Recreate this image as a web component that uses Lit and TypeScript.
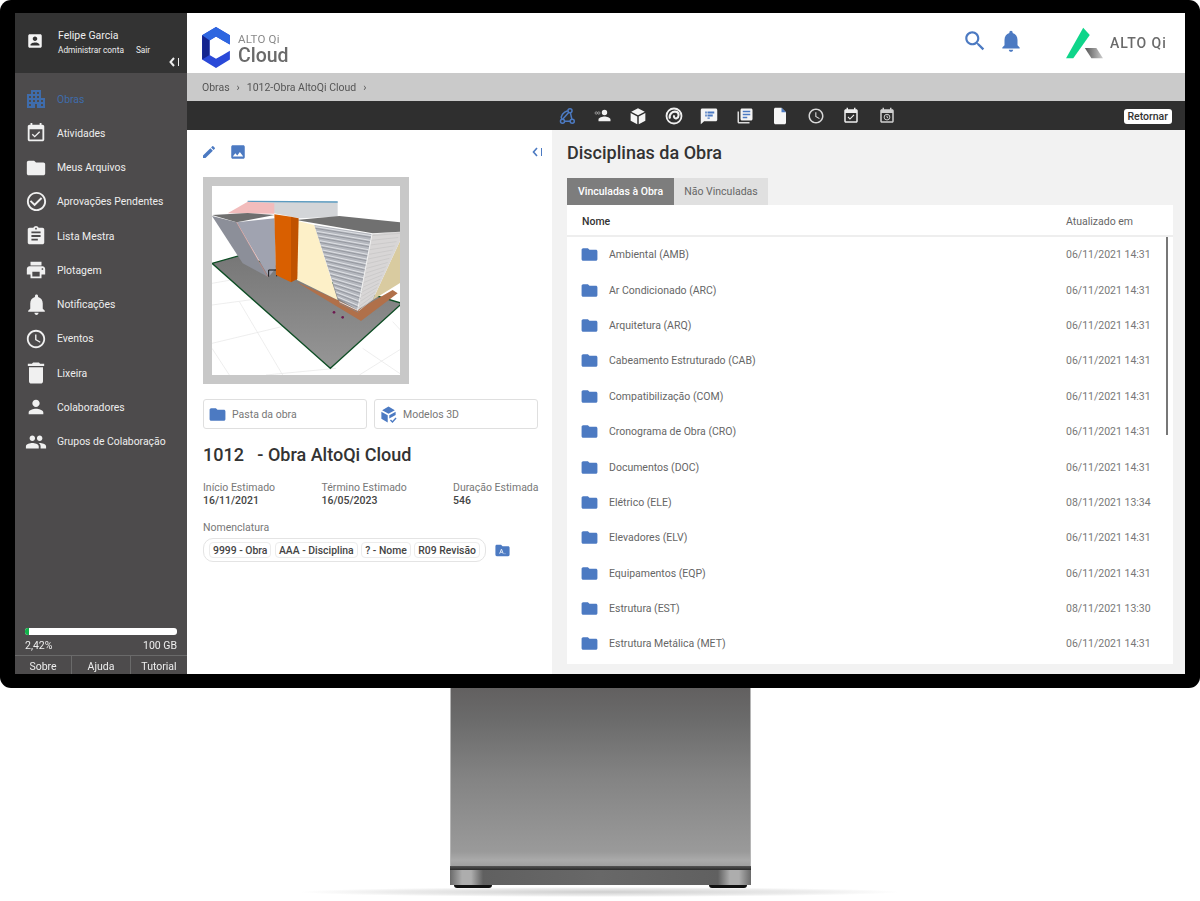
import { LitElement, html, css, svg } from "lit";
import { customElement } from "lit/decorators.js";

const P = {
  account: "M3 5v14c0 1.1.89 2 2 2h14c1.1 0 2-.9 2-2V5c0-1.1-.9-2-2-2H5c-1.11 0-2 .9-2 2zm12 4c0 1.66-1.34 3-3 3s-3-1.34-3-3 1.34-3 3-3 3 1.34 3 3zm-9 8c0-2 4-3.1 6-3.1s6 1.1 6 3.1v1H6v-1z",
  city: "M17 11V3H7v4H3v14h8v-4h2v4h8V11h-4zM7 19H5v-2h2v2zm0-4H5v-2h2v2zm0-4H5V9h2v2zm4 4H9v-2h2v2zm0-4H9V9h2v2zm0-4H9V5h2v2zm4 8h-2v-2h2v2zm0-4h-2V9h2v2zm0-4h-2V5h2v2zm4 12h-2v-2h2v2zm0-4h-2v-2h2v2z",
  event: "M16.53 11.06L15.47 10l-4.88 4.88-2.12-2.12-1.06 1.06L10.59 17l5.94-5.94zM19 3h-1V1h-2v2H8V1H6v2H5c-1.11 0-1.99.9-1.99 2L3 19c0 1.1.89 2 2 2h14c1.1 0 2-.9 2-2V5c0-1.1-.9-2-2-2zm0 16H5V8h14v11z",
  folder: "M10 4H4c-1.1 0-1.99.9-1.99 2L2 18c0 1.1.9 2 2 2h16c1.1 0 2-.9 2-2V8c0-1.1-.9-2-2-2h-8l-2-2z",
  check: "M16.59 7.58L10 14.17l-3.59-3.58L5 12l5 5 8-8zM12 2C6.48 2 2 6.48 2 12s4.48 10 10 10 10-4.48 10-10S17.52 2 12 2zm0 18c-4.42 0-8-3.58-8-8s3.58-8 8-8 8 3.58 8 8-3.58 8-8 8z",
  assignment: "M19 3h-4.18C14.4 1.84 13.3 1 12 1c-1.3 0-2.4.84-2.82 2H5c-1.1 0-2 .9-2 2v14c0 1.1.9 2 2 2h14c1.1 0 2-.9 2-2V5c0-1.1-.9-2-2-2zm-7 0c.55 0 1 .45 1 1s-.45 1-1 1-1-.45-1-1 .45-1 1-1zm2 14H7v-2h7v2zm3-4H7v-2h10v2zm0-4H7V7h10v2z",
  print: "M19 8H5c-1.66 0-3 1.34-3 3v6h4v4h12v-4h4v-6c0-1.66-1.34-3-3-3zm-3 11H8v-5h8v5zm3-7c-.55 0-1-.45-1-1s.45-1 1-1 1 .45 1 1-.45 1-1 1zm-1-9H6v4h12V3z",
  bell: "M12 22c1.1 0 2-.9 2-2h-4c0 1.1.89 2 2 2zm6-6v-5c0-3.07-1.64-5.64-4.5-6.32V4c0-.83-.67-1.5-1.5-1.5s-1.5.67-1.5 1.5v.68C7.63 5.36 6 7.92 6 11v5l-2 2v1h16v-1l-2-2z",
  clock: "M11.99 2C6.47 2 2 6.48 2 12s4.47 10 9.99 10C17.52 22 22 17.52 22 12S17.52 2 11.99 2zM12 20c-4.42 0-8-3.58-8-8s3.58-8 8-8 8 3.58 8 8-3.58 8-8 8zm.5-13H11v6l5.25 3.15.75-1.23-4.5-2.67z",
  trash: "M6 19c0 1.1.9 2 2 2h8c1.1 0 2-.9 2-2V7H6v12zM19 4h-3.5l-1-1h-5l-1 1H5v2h14V4z",
  person: "M12 12c2.21 0 4-1.79 4-4s-1.79-4-4-4-4 1.79-4 4 1.79 4 4 4zm0 2c-2.67 0-8 1.34-8 4v2h16v-2c0-2.66-5.33-4-8-4z",
  people: "M16 11c1.66 0 2.99-1.34 2.99-3S17.66 5 16 5c-1.66 0-3 1.34-3 3s1.34 3 3 3zm-8 0c1.66 0 2.99-1.34 2.99-3S9.66 5 8 5C6.34 5 5 6.34 5 8s1.34 3 3 3zm0 2c-2.33 0-7 1.17-7 3.5V19h14v-2.5c0-2.33-4.67-3.5-7-3.5zm8 0c-.29 0-.62.02-.97.05 1.16.84 1.97 1.97 1.97 3.45V19h6v-2.5c0-2.33-4.67-3.5-7-3.5z",
  search: "M15.5 14h-.79l-.28-.27C15.41 12.59 16 11.11 16 9.5 16 5.91 13.09 3 9.5 3S3 5.91 3 9.5 5.91 16 9.5 16c1.61 0 3.09-.59 4.23-1.57l.27.28v.79l5 4.99L20.49 19l-4.99-5zm-6 0C7.01 14 5 11.99 5 9.5S7.01 5 9.5 5 14 7.01 14 9.5 11.99 14 9.5 14z",
  edit: "M3 17.25V21h3.75L17.81 9.94l-3.75-3.75L3 17.25zM20.71 7.04c.39-.39.39-1.02 0-1.41l-2.34-2.34c-.39-.39-1.02-.39-1.41 0l-1.83 1.83 3.75 3.75 1.83-1.83z",
  image: "M21 19V5c0-1.1-.9-2-2-2H5c-1.1 0-2 .9-2 2v14c0 1.1.9 2 2 2h14c1.1 0 2-.9 2-2zM8.5 13.5l2.5 3.01L14.5 12l4.5 6H5l3.5-4.5z",
  books: "M4 6H2v14c0 1.1.9 2 2 2h14v-2H4V6z",
};

const BLUE = "#4c7ac2";

const icon = (d: string, size: number, color: string) => html`<svg class="ic" width=${size} height=${size} viewBox="0 0 24 24" fill=${color}><path d=${d}></path></svg>`;

// label, path, icon size
const NAV: [string, string, number][] = [
  ["Obras", P.city, 24],
  ["Atividades", P.event, 22],
  ["Meus Arquivos", P.folder, 22],
  ["Aprovações Pendentes", P.check, 23],
  ["Lista Mestra", P.assignment, 22],
  ["Plotagem", P.print, 22],
  ["Notificações", P.bell, 25],
  ["Eventos", P.clock, 22],
  ["Lixeira", P.trash, 28],
  ["Colaboradores", P.person, 22],
  ["Grupos de Colaboração", P.people, 22],
];

const ROWS = [
  ["Ambiental (AMB)", "06/11/2021 14:31"],
  ["Ar Condicionado (ARC)", "06/11/2021 14:31"],
  ["Arquitetura (ARQ)", "06/11/2021 14:31"],
  ["Cabeamento Estruturado (CAB)", "06/11/2021 14:31"],
  ["Compatibilização (COM)", "06/11/2021 14:31"],
  ["Cronograma de Obra (CRO)", "06/11/2021 14:31"],
  ["Documentos (DOC)", "06/11/2021 14:31"],
  ["Elétrico (ELE)", "08/11/2021 13:34"],
  ["Elevadores (ELV)", "06/11/2021 14:31"],
  ["Equipamentos (EQP)", "06/11/2021 14:31"],
  ["Estrutura (EST)", "08/11/2021 13:30"],
  ["Estrutura Metálica (MET)", "06/11/2021 14:31"],
];

const FIELDS = [
  ["Início Estimado", "16/11/2021", 119],
  ["Término Estimado", "16/05/2023", 132],
  ["Duração Estimada", "546", 85],
];

const TOOLS = [
  svg`<g fill="none" stroke="#4c7ac2" stroke-width="2"><path d="M6.500 16 14.500 7M8.500 19h8M18.500 16.500 16.500 7.500M5 16c-2-4 2-9 8-11"></path><circle cx="6" cy="19" r="2.700"></circle><circle cx="19" cy="19" r="2.700"></circle><circle cx="16" cy="5" r="2.700"></circle></g>`,
  svg`<path fill="#f0f0f0" d="M14 11a3.600 3.600 0 1 0 0-7.200 3.600 3.600 0 0 0 0 7.200zm0 1.800c-2.600 0-8 1.300-8 3.900V19h16v-2.300c0-2.600-5.400-3.900-8-3.900z"></path><g fill="none" stroke="#aaa" stroke-width="1"><circle cx="3" cy="8" r="1.600"></circle><circle cx="6.400" cy="8" r="1.600"></circle></g>`,
  svg`<path fill="#f4f4f4" d="M12 1.500 21 6.400 12 11 3 6.400zM2.200 8 11 12.500V23L2.200 18.200zM21.800 8 13 12.500V23l8.800-4.800z"></path>`,
  svg`<g fill="none" stroke="#f0f0f0"><circle cx="12" cy="12" r="10" stroke-width="2.400"></circle><path stroke-width="2.800" d="M6.500 15.500c-1.500-5.500 3-10.500 9-9 3.500 1 3.500 7 0 8.500-2.500 1-4.500-1.500-3-4"></path></g>`,
  svg`<path fill="#f4f4f4" d="M21 2H3C1.900 2 1 2.900 1 4v19l4.500-4H21c1.100 0 2-.9 2-2V4c0-1.100-.9-2-2-2z"></path><path fill="#4c7ac2" d="M10 6h9v2.500h-9zM10 10h7v2.500h-7zM10 14h3v1.500h-3zM7 6h2v2.500H7zM7 10h2v2.500H7z"></path>`,
  svg`<path fill="#dcdcdc" d=${P.books}></path><path fill="#f4f4f4" d="M8 2h12c1.100 0 2 .9 2 2v12c0 1.100-.9 2-2 2H8c-1.100 0-2-.9-2-2V4c0-1.100.9-2 2-2z"></path><path fill="#4c7ac2" d="M9 5h10v2H9zM9 9h10v2H9zM9 13h6v2H9z"></path>`,
  svg`<path fill="#f6f6f6" d="M6 1C4.900 1 4.010 1.900 4.010 3L4 21c0 1.100.89 2 1.990 2H18c1.100 0 2-.9 2-2V7l-6-6H6z"></path><path fill="#4c7ac2" d="M14 1l6 6h-6z"></path>`,
  svg`<path fill="#d8d8d8" d=${P.clock}></path>`,
  svg`<path fill="#eeeeee" d=${P.event}></path>`,
  svg`<path fill="#d0d0d0" d="M19 3h-1V1h-2v2H8V1H6v2H5c-1.110 0-1.990.9-1.990 2L3 19c0 1.100.89 2 2 2h14c1.100 0 2-.9 2-2V5c0-1.100-.9-2-2-2zm0 16H5V8h14v11z"></path><g fill="none" stroke="#d0d0d0" stroke-width="1.300"><circle cx="12" cy="13.500" r="3.800"></circle><path d="M12 11.500v2.200l1.600 1"></path></g>`,
];

// stripes on the facade of the model
const stripes = Array.from({ length: 17 }, (_, i) => {
  const t = i / 16;
  const y1 = 275 + t * 225;
  const x1 = 358 + t * 72;
  const x2 = 525 - t * 38;
  const y2 = 302 + t * 225;
  return svg`<line x1=${x1} y1=${y1} x2=${x2} y2=${y2} stroke="#dfe1e5" stroke-width="3"></line><line x1=${x1} y1=${y1 + 5} x2=${x2} y2=${y2 + 5} stroke="#85888f" stroke-width="2"></line><line x1=${x2 + 2} y1=${y2} x2=${612 - t * 85} y2=${295 + t * 200} stroke="#c9c8c8" stroke-width="2.500"></line>`;
});

@customElement("app-root")
export class AppRoot extends LitElement {
  static styles = css`
    :host {
      display: block;
      position: relative;
      width: 1200px;
      height: 901px;
      overflow: hidden;
      background: #fff;
      font-family: Roboto, "Liberation Sans", sans-serif;
      font-size: 11px;
    }
    .ic {
      display: block;
      flex: none;
    }

    /* monitor */
    .frame {
      box-sizing: border-box;
      height: 688px;
      padding: 13px 15px 14px;
      background: #000;
      border-radius: 11px;
    }
    .screen {
      display: flex;
      height: 661px;
      overflow: hidden;
      filter: blur(0.3px);
    }
    .stand {
      position: relative;
      z-index: 1;
      display: flex;
      flex-direction: column;
      width: 301px;
      height: 200px;
      margin-left: 450px;
    }
    .stand-body {
      flex: 1;
      border-left: 1px solid #b5b5b5;
      border-right: 1px solid #b5b5b5;
      background: linear-gradient(#626060, #6b6b6b 18%, #838383 50%, #9a9a9a 92%, #ababab 97%, #a0a0a0);
    }
    .stand-lip {
      height: 4px;
      background: linear-gradient(#555, #2c2c2c);
    }
    .stand-base {
      height: 15px;
      background: linear-gradient(90deg, #6a6a6a, #adadad 4%, #adadad 7%, #606060 11%, #686868 50%, #606060 89%, #adadad 93%, #adadad 96%, #6a6a6a);
    }
    .stand-feet {
      display: flex;
      justify-content: space-between;
      height: 3px;
      padding: 0 4px;
    }
    .stand-feet i {
      display: block;
      width: 38px;
      background: #111;
      border-radius: 0 0 3px 3px;
    }
    .floor {
      position: absolute;
      left: 300px;
      top: 887px;
      width: 600px;
      height: 10px;
      background: radial-gradient(closest-side, #cfcfcf, #ececec 70%, #fff);
    }

    /* sidebar */
    .side {
      display: flex;
      flex-direction: column;
      flex: none;
      width: 172px;
      background: #4d4b4c;
      color: #eee;
    }
    .user {
      display: flex;
      height: 60px;
      box-sizing: border-box;
      padding: 17px 7px 0 11px;
      background: #333;
      gap: 14px;
    }
    .user > .ic {
      margin-top: 2px;
    }
    .user-info {
      flex: 1;
    }
    .user-name {
      font-size: 10.5px;
      line-height: 12px;
    }
    .user-links {
      display: flex;
      gap: 12px;
      margin-top: 3px;
      font-size: 8.3px;
      line-height: 10px;
    }
    .collapse {
      display: flex;
      justify-content: flex-end;
      margin-top: 2px;
    }
    .nav {
      flex: 1;
      padding-top: 9px;
    }
    .nav-item {
      display: flex;
      align-items: center;
      gap: 10px;
      height: 34.25px;
      padding-left: 10px;
      font-size: 10.4px;
    }
    .nav-item.on {
      color: #3f6cab;
    }
    .nav-icon {
      display: flex;
      justify-content: center;
      align-items: center;
      flex: none;
      width: 22px;
    }
    .nav-icon .ic {
      margin: -4px;
    }
    .usage {
      padding: 0 10px;
    }
    .bar {
      height: 7px;
      background: #fff;
      border-radius: 3px;
      overflow: hidden;
    }
    .bar i {
      display: block;
      height: 100%;
      background: #12b04a;
    }
    .usage-text {
      display: flex;
      justify-content: space-between;
      height: 20px;
      align-items: center;
      font-size: 10.5px;
    }
    .links {
      display: flex;
      height: 18px;
      border-top: 1px solid #6a6a6a;
      text-align: center;
      font-size: 10.5px;
      line-height: 21px;
    }
    .links span + span {
      border-left: 1px solid #6a6a6a;
    }
    .links span:nth-child(1) {
      width: 56px;
    }
    .links span:nth-child(2) {
      width: 58px;
    }
    .links span:nth-child(3) {
      flex: 1;
    }

    /* top */
    .main {
      flex: 1;
      display: flex;
      flex-direction: column;
      min-width: 0;
    }
    .top {
      display: flex;
      align-items: center;
      flex: none;
      height: 60px;
      background: #fff;
      padding: 0 16px 0 15px;
    }
    .brand {
      display: flex;
      align-items: center;
      gap: 8px;
      flex: 1;
      padding-top: 9px;
      color: #6a6a6a;
    }
    .brand-text {
      margin-top: 4px;
    }
    .brand-alto {
      font-size: 11.5px;
      line-height: 12px;
      letter-spacing: 0.2px;
      color: #8a8a8a;
    }
    .brand-cloud {
      font-size: 19.5px;
      line-height: 21px;
      font-weight: 500;
    }
    .top-actions {
      display: flex;
      align-items: center;
      gap: 10px;
      margin: 0 41px 4px 0;
    }
    .alto {
      display: flex;
      align-items: center;
      gap: 6px;
      color: #6a6a6a;
      font-size: 14px;
      font-weight: 500;
      letter-spacing: 1px;
      width: 104px;
      white-space: nowrap;
    }
    .crumb {
      display: flex;
      align-items: center;
      gap: 7px;
      flex: none;
      height: 28px;
      padding-left: 15px;
      background: #cacaca;
      color: #555;
      font-size: 10.5px;
    }
    .tools {
      display: flex;
      align-items: center;
      flex: none;
      height: 29px;
      box-sizing: border-box;
      padding: 1px 13px 0 371px;
      background: #2f2f2f;
    }
    .tools-icons {
      display: flex;
      flex: 1;
      gap: 17.5px;
    }
    .back {
      padding: 0 4px;
      height: 15px;
      line-height: 15px;
      border-radius: 3px;
      background: #fff;
      color: #333;
      font-size: 10.5px;
      font-weight: 500;
    }

    /* content */
    .content {
      flex: 1;
      display: flex;
      min-height: 0;
    }
    .left {
      flex: none;
      width: 365px;
      box-sizing: border-box;
      padding: 13px 14px 0 16px;
      background: #fff;
    }
    .left-tools {
      display: flex;
      align-items: center;
      gap: 12px;
      height: 18px;
      margin: 0 -5px 0 -2px;
    }
    .left-tools span {
      flex: 1;
    }
    .photo {
      width: 188px;
      height: 189px;
      margin-top: 16px;
      border: 9px solid #c8c8c8;
      background: #fff;
    }
    .photo svg {
      display: block;
    }
    .btns {
      display: flex;
      gap: 7px;
      margin-top: 15px;
    }
    .btn {
      display: flex;
      align-items: center;
      gap: 5px;
      flex: 1;
      height: 30px;
      box-sizing: border-box;
      padding-left: 4px;
      border: 1px solid #dfdfdf;
      border-radius: 3px;
      color: #777;
      font-size: 10.5px;
    }
    .title {
      margin: 15px 0 0;
      font-size: 18px;
      line-height: 22px;
      font-weight: 500;
      color: #333;
      white-space: pre;
    }
    .fields {
      display: flex;
      margin-top: 15px;
    }
    .field {
      white-space: nowrap;
    }
    .field-label {
      color: #777;
      font-size: 10.5px;
      line-height: 13px;
    }
    .field-value {
      color: #444;
      font-size: 10.5px;
      line-height: 13px;
      font-weight: 500;
    }
    .nom-label {
      margin-top: 14px;
      color: #777;
      font-size: 10.5px;
      line-height: 13px;
    }
    .nom {
      display: flex;
      align-items: center;
      gap: 8px;
      margin-top: 4px;
    }
    .chips {
      display: flex;
      align-items: center;
      gap: 3.5px;
      height: 24px;
      box-sizing: border-box;
      padding: 0 5px;
      border: 1px solid #e4e4e4;
      border-radius: 10px;
    }
    .chip {
      height: 16px;
      line-height: 16px;
      padding: 0 3px;
      border: 1px solid #ececec;
      border-radius: 4px;
      box-sizing: border-box;
      color: #444;
      font-size: 10.4px;
      font-weight: 500;
      white-space: nowrap;
    }
    .right {
      flex: 1;
      min-width: 0;
      box-sizing: border-box;
      padding: 11px 12px 10px 15px;
      background: #f2f2f2;
    }
    .right h2 {
      margin: 0;
      font-size: 18px;
      line-height: 24px;
      font-weight: 500;
      color: #333;
    }
    .tabs {
      display: flex;
      margin-top: 13px;
      height: 27px;
      line-height: 27px;
      font-size: 10.5px;
      text-align: center;
    }
    .tab {
      width: 94px;
      background: #e0e0e0;
      color: #666;
    }
    .tab.on {
      width: 107px;
      background: #7d7d7d;
      color: #fff;
      font-weight: 500;
    }
    .table {
      position: relative;
      height: 459px;
      background: #fff;
      overflow: hidden;
    }
    .head,
    .row {
      display: grid;
      grid-template-columns: 1fr 107px;
      align-items: center;
      color: #666;
      font-size: 10.5px;
    }
    .head {
      height: 32px;
      box-sizing: border-box;
      padding: 2px 0 0 15px;
      border-bottom: 2px solid #eee;
    }
    .head b {
      font-weight: 500;
      color: #333;
    }
    .row {
      height: 35.4px;
      padding-left: 13px;
    }
    .row-name {
      display: flex;
      align-items: center;
      gap: 10px;
    }
    .row-date {
      color: #777;
    }
    .scroll {
      position: absolute;
      right: 5px;
      top: 32px;
      width: 2px;
      height: 198px;
      background: #777;
    }
  `;

  private renderLogo() {
    return html`<svg width="28" height="41" viewBox="608 82 82 121">
      <path fill="#2a49d8" d="M649 82 690 106V134L669 122 649 110 630 122V165L649 176 669 165 690 152V178L649 203 608 178V106Z"></path>
      <path fill="#2e66e0" d="M649 82 690 106V134L669 122 649 110 630 122 608 106Z"></path>
      <path fill="#14248f" d="M608 106 630 122V165L608 178Z"></path>
    </svg>`;
  }

  private renderModel() {
    return html`<svg width="188" height="189" viewBox="48 153 564 567" preserveAspectRatio="none">
      <defs>
        <linearGradient id="gnd" x1="0" y1="0" x2="0" y2="1"><stop offset="0" stop-color="#777"></stop><stop offset="1" stop-color="#969696"></stop></linearGradient>
      </defs>
      <g stroke="#e6e6e6" stroke-width="2" fill="none">
        <path d="M48 445 190 420M48 510 270 480M48 625 320 560M210 720 420 700M490 720 618 640M100 720 48 640M130 500 260 720M500 640 618 720M590 560 618 590"></path>
      </g>
      <path fill="url(#gnd)" stroke="#0d4d24" stroke-width="4" d="M48 385 130 362 618 505 403 700Z"></path>
      <path fill="#d3d5d8" d="M155 198 425 200 425 245 310 250 235 235 155 232Z"></path>
      <path fill="none" stroke="#5b9bc0" stroke-width="4" d="M155 199 425 201"></path>
      <path fill="#f2bcbc" d="M95 235 155 200 235 205 235 236Z"></path>
      <path fill="#8c8f99" d="M48 243 122 262 215 425 140 385Z"></path>
      <path fill="#a0a3b0" d="M122 262 236 250 240 400 218 425Z"></path>
      <path fill="#6f6f6f" d="M48 240 155 234 236 240 122 262Z"></path>
      <path fill="none" stroke="#e08a80" stroke-width="1.5" d="M122 262 215 425"></path>
      <path fill="none" stroke="#111" stroke-width="3" d="M218 425V405H242V424"></path>
      <path fill="#b0704a" d="M300 440 425 495 485 525 590 465 605 475 495 558Z"></path>
      <path fill="#fdf0c8" d="M305 258 355 270 425 495 303 435Z"></path>
      <path fill="#d9cba0" d="M618 305V440L530 495Z"></path>
      <path fill="#b5b8bf" d="M355 270 528 297 485 525 425 490Z"></path>
      <path fill="#d8d6d6" d="M528 297 618 290V305L530 495 485 525Z"></path>
      ${stripes}
      <path fill="#707070" d="M300 255 430 243 618 262V290L530 295Z"></path>
      <path fill="none" stroke="#f0f0f0" stroke-width="3" d="M528 297 485 525"></path>
      <path fill="#d95f00" d="M235 238 285 245 285 442 240 420Z"></path>
      <path fill="#c05200" d="M285 245 308 250 304 432 285 442Z"></path>
      <circle cx="414" cy="532" r="4" fill="#6d1a50"></circle>
      <circle cx="440" cy="547" r="4" fill="#6d1a50"></circle>
    </svg>`;
  }

  render() {
    return html`
      <div class="floor"></div>
      <div class="frame">
        <div class="screen">
          <aside class="side">
            <div class="user">
              ${icon(P.account, 18, "#f4f4f4")}
              <div class="user-info">
                <div class="user-name">Felipe Garcia</div>
                <div class="user-links"><span>Administrar conta</span><span>Sair</span></div>
                <div class="collapse">
                  <svg width="11" height="10" viewBox="0 0 11 10" fill="none" stroke="#eee"><path stroke-width="2" d="M5 1 1.5 5 5 9"></path><path d="M9.5 1v8"></path></svg>
                </div>
              </div>
            </div>
            <nav class="nav">
              ${NAV.map(([label, d, size], i) => html`<div class="nav-item ${i === 0 ? "on" : ""}"><span class="nav-icon">${icon(d, size, i === 0 ? "#3f6cab" : "#f0f0f0")}</span><span>${label}</span></div>`)}
            </nav>
            <div class="usage">
              <div class="bar"><i style="width:2.42%"></i></div>
              <div class="usage-text"><span>2,42%</span><span>100 GB</span></div>
            </div>
            <div class="links"><span>Sobre</span><span>Ajuda</span><span>Tutorial</span></div>
          </aside>
          <div class="main">
            <header class="top">
              <div class="brand">
                ${this.renderLogo()}
                <div class="brand-text">
                  <div class="brand-alto">ALTO Qi</div>
                  <div class="brand-cloud">Cloud</div>
                </div>
              </div>
              <div class="top-actions">
                ${icon(P.search, 26, BLUE)} ${icon(P.bell, 26, BLUE)}
              </div>
              <div class="alto">
                <svg width="39" height="32" viewBox="345 48 118 97">
                  <defs><linearGradient id="gq" x1="0" x2="1"><stop offset="0" stop-color="#555"></stop><stop offset="1" stop-color="#ccc"></stop></linearGradient></defs>
                  <path fill="#0fd58a" d="M400 50 420 72 370 143H348Z"></path>
                  <path fill="url(#gq)" d="M405 112H440L460 143H425Z"></path>
                </svg>
                <span>ALTO Qi</span>
              </div>
            </header>
            <div class="crumb"><span>Obras</span><span>›</span><span>1012-Obra AltoQi Cloud</span><span>›</span></div>
            <div class="tools">
              <div class="tools-icons">
                ${TOOLS.map((t) => html`<svg class="ic" width="18" height="18" viewBox="0 0 24 24">${t}</svg>`)}
              </div>
              <div class="back">Retornar</div>
            </div>
            <div class="content">
              <section class="left">
                <div class="left-tools">
                  ${icon(P.edit, 16, BLUE)} ${icon(P.image, 18, BLUE)}
                  <span></span>
                  <svg width="11" height="10" viewBox="0 0 11 10" fill="none" stroke="${BLUE}"><path stroke-width="1.6" d="M5 1 1.5 5 5 9"></path><path d="M9.5 1v8"></path></svg>
                </div>
                <div class="photo">${this.renderModel()}</div>
                <div class="btns">
                  <div class="btn">${icon(P.folder, 19, BLUE)}<span>Pasta da obra</span></div>
                  <div class="btn">
                    <svg class="ic" width="19" height="19" viewBox="0 0 24 24"><path fill="${BLUE}" d="M12 2 20 6.500 12 11 4 6.500zM3 8.500 11 13V22L3 17.500zM21 8.500 13 13V17L21 12.500z"></path><path fill="none" stroke="${BLUE}" stroke-width="1.800" d="M14.500 19 17 21.500 21.500 16.500"></path></svg>
                    <span>Modelos 3D</span>
                  </div>
                </div>
                <h1 class="title">1012   - Obra AltoQi Cloud</h1>
                <div class="fields">
                  ${FIELDS.map(([label, value, w]) => html`<div class="field" style="width:${w}px"><div class="field-label">${label}</div><div class="field-value">${value}</div></div>`)}
                </div>
                <div class="nom-label">Nomenclatura</div>
                <div class="nom">
                  <div class="chips">
                    <span class="chip">9999 - Obra</span>
                    <span class="chip">AAA - Disciplina</span>
                    <span class="chip">? - Nome</span>
                    <span class="chip">R09 Revisão</span>
                  </div>
                  <svg class="ic" width="17" height="17" viewBox="0 0 24 24"><path fill="${BLUE}" d=${P.folder}></path><path fill="none" stroke="#dfe8f6" stroke-width="1.400" d="M8 16.500 10.500 10 13 16.500M9 14.500h3M15 16.500h1"></path></svg>
                </div>
              </section>
              <section class="right">
                <h2>Disciplinas da Obra</h2>
                <div class="tabs">
                  <div class="tab on">Vinculadas à Obra</div>
                  <div class="tab">Não Vinculadas</div>
                </div>
                <div class="table">
                  <div class="head"><b>Nome</b><span>Atualizado em</span></div>
                  ${ROWS.map(([name, date]) => html`<div class="row"><div class="row-name">${icon(P.folder, 19, BLUE)}<span>${name}</span></div><span class="row-date">${date}</span></div>`)}
                  <div class="scroll"></div>
                </div>
              </section>
            </div>
          </div>
        </div>
      </div>
      <div class="stand">
        <div class="stand-body"></div>
        <div class="stand-lip"></div>
        <div class="stand-base"></div>
        <div class="stand-feet"><i></i><i></i></div>
      </div>
    `;
  }
}
